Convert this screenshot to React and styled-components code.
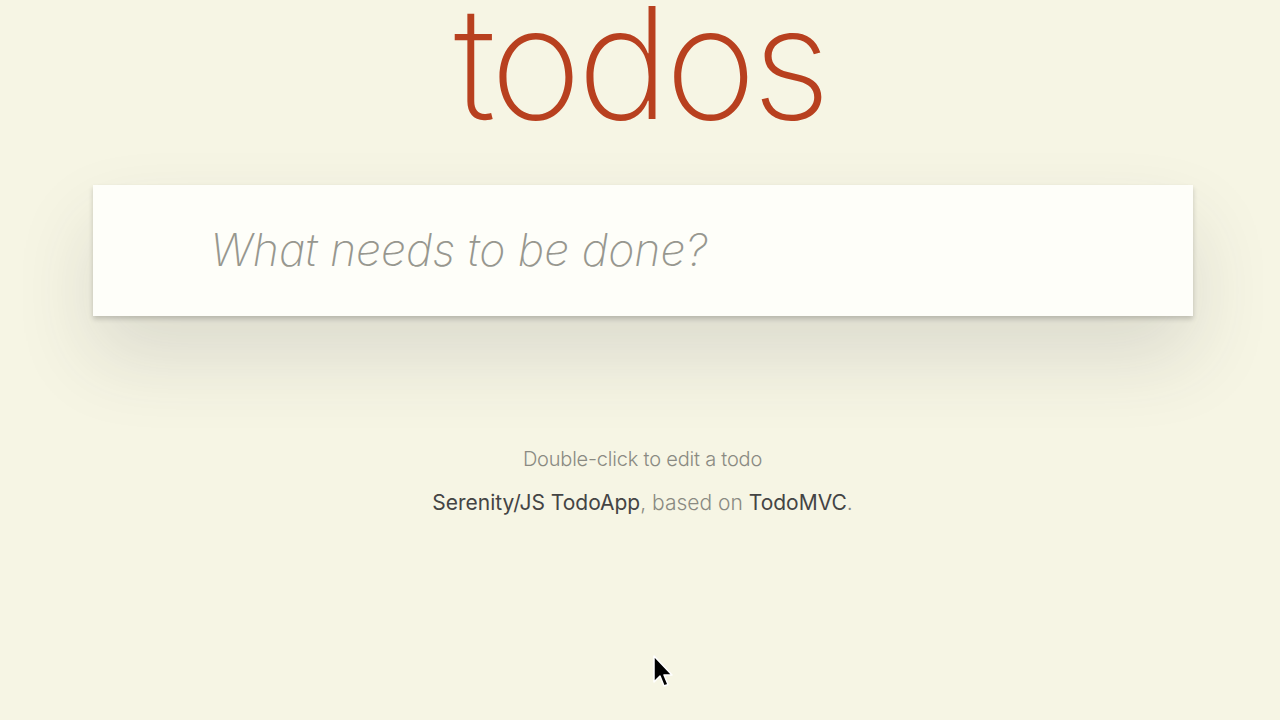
import styled, { createGlobalStyle } from 'styled-components';

const Global = createGlobalStyle`
  html, body {
    margin: 0;
    padding: 0;
    background: #f6f5e4;
    font-family: "Helvetica Neue", Inter, "Liberation Sans", Arial, sans-serif;
    overflow: hidden;
  }
`;

const Page = styled.div`
  position: relative;
  width: 1280px;
  height: 720px;
  display: flex;
  flex-direction: column;
  align-items: center;
`;

const Title = styled.h1`
  margin: 0;
  padding-top: 3px;
  height: 147px;
  font-family: Inter, "Helvetica Neue", sans-serif;
  font-weight: 200;
  font-size: 156px;
  line-height: 120px;
  letter-spacing: -4.5px;
  color: #b8401f;
  text-align: center;
`;

const Card = styled.section`
  margin-top: 35px;
  margin-left: 5px;
  width: 1100px;
  background: #fefef9;
  box-shadow:
    0 3px 5px rgba(0, 0, 0, 0.18),
    0 40px 80px rgba(60, 60, 70, 0.14);
`;

const NewTodo = styled.input`
  box-sizing: border-box;
  width: 100%;
  height: 131px;
  padding: 0 40px 2px 118px;
  border: none;
  outline: none;
  background: transparent;
  font-family: Inter, "Helvetica Neue", sans-serif;
  font-size: 44.6px;
  font-weight: 200;
  color: #4d4d4d;

  &::placeholder {
    font-style: italic;
    font-weight: 200;
    color: #97978f;
  }
`;

const Info = styled.footer`
  margin-top: 130px;
  margin-left: 5px;
  display: flex;
  flex-direction: column;
  align-items: center;
  gap: 18px;
  font-family: Inter, "Helvetica Neue", sans-serif;
  font-weight: 300;
  color: #8a8a82;
`;

const Line = styled.p`
  margin: 0;
  line-height: 26px;
  font-size: ${(p) => p.$size}px;
  letter-spacing: ${(p) => p.$spacing || 0}px;
`;

const Link = styled.a`
  color: #444;
  font-weight: 400;
  text-decoration: none;
`;

const Cursor = styled.svg`
  position: absolute;
  left: 652px;
  top: 655px;
`;

export default function App() {
  return (
    <Page>
      <Global />
      <Title>todos</Title>
      <Card>
        <NewTodo placeholder="What needs to be done?" />
      </Card>
      <Info>
        <Line $size={20} $spacing={-0.2}>Double-click to edit a todo</Line>
        <Line $size={21}>
          <Link href="#">Serenity/JS TodoApp</Link>, based on <Link href="#">TodoMVC</Link>.
        </Line>
      </Info>
      <Cursor width="22" height="34" viewBox="0 0 22 34">
        <path d="M2 1 L2 27 L8 21 L12 31 L16 29.5 L12 20 L20 20 Z" fill="#000" stroke="#fff" strokeWidth="1.5" strokeLinejoin="round" />
      </Cursor>
    </Page>
  );
}
